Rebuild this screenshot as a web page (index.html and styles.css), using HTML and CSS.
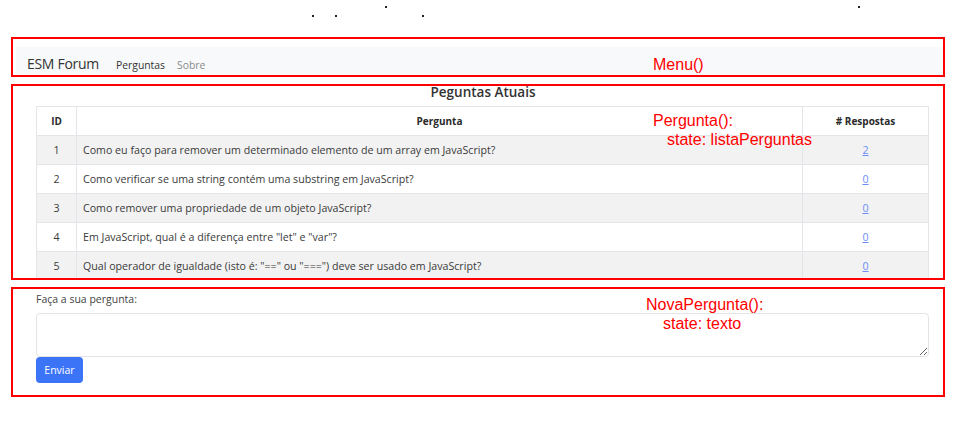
FILE: index.html
```html
<!DOCTYPE html>
<html lang="pt">
<head>
<meta charset="utf-8">
<title>ESM Forum</title>
<link rel="stylesheet" href="styles.css">
</head>
<body>
<div class="page">
  <div class="marks">
    <span class="dot d1"></span><span class="dot d2"></span><span class="dot d3"></span><span class="dot d4"></span><span class="dot d5"></span>
  </div>

  <section class="box box-menu">
    <nav class="navbar">
      <span class="brand">ESM Forum</span>
      <a class="nav-link active">Perguntas</a>
      <a class="nav-link muted">Sobre</a>
    </nav>
    <div class="note note-menu">Menu()</div>
  </section>

  <section class="box box-list">
    <h2 class="title">Peguntas Atuais</h2>
    <table class="qtable">
      <thead>
        <tr><th class="c-id">ID</th><th class="c-q">Pergunta</th><th class="c-r"># Respostas</th></tr>
      </thead>
      <tbody>
        <tr class="odd"><td class="c-id">1</td><td class="c-q">Como eu faço para remover um determinado elemento de um array em JavaScript?</td><td class="c-r"><a class="link">2</a></td></tr>
        <tr><td class="c-id">2</td><td class="c-q">Como verificar se uma string contém uma substring em JavaScript?</td><td class="c-r"><a class="link">0</a></td></tr>
        <tr class="odd"><td class="c-id">3</td><td class="c-q">Como remover uma propriedade de um objeto JavaScript?</td><td class="c-r"><a class="link">0</a></td></tr>
        <tr><td class="c-id">4</td><td class="c-q">Em JavaScript, qual é a diferença entre "let" e "var"?</td><td class="c-r"><a class="link">0</a></td></tr>
        <tr class="odd"><td class="c-id">5</td><td class="c-q">Qual operador de igualdade (isto é: "==" ou "===") deve ser usado em JavaScript?</td><td class="c-r"><a class="link">0</a></td></tr>
      </tbody>
    </table>
    <div class="note note-list"><span class="line">Pergunta():</span><span class="line indent-a">state: listaPerguntas</span></div>
  </section>

  <section class="box box-form">
    <label class="form-label" for="texto">Faça a sua pergunta:</label>
    <textarea id="texto" class="form-input"></textarea>
    <button class="btn">Enviar</button>
    <div class="note note-form"><span class="line">NovaPergunta():</span><span class="line indent-b">state: texto</span></div>
  </section>
</div>
</body>
</html>
```
FILE: styles.css
```css
* { box-sizing: border-box; }
html, body { margin: 0; padding: 0; background: #fff; }
body {
  font-family: "Open Sans", "Noto Sans", sans-serif;
  color: #333;
  width: 956px;
  height: 426px;
  overflow: hidden;
}
.page { display: flex; flex-direction: column; gap: 7px; }

.marks { position: relative; height: 30px; }
.dot { position: absolute; width: 2px; height: 2px; background: #222; }
.d1 { left: 312px; top: 15px; }
.d2 { left: 335px; top: 15px; }
.d3 { left: 385px; top: 6px; }
.d4 { left: 422px; top: 15px; }
.d5 { left: 858px; top: 6px; }

.box {
  position: relative;
  margin: 0 11px;
  border: 2px solid #f00;
}

/* menu */
.box-menu { height: 40px; }
.navbar {
  margin: 8px 0 0 3px;
  height: 28px;
  background: #f8f9fa;
  display: flex;
  align-items: baseline;
  padding: 8px 11px 0;
}
.brand { font-size: 14px; letter-spacing: -0.3px; line-height: 18px; color: #333; margin-right: 17px; }
.nav-link { font-size: 10.4px; line-height: 18px; color: #333; margin-right: 12px; }
.nav-link.muted { color: #8a8a8a; }

/* list */
.box-list { height: 196px; overflow: hidden; }
.title {
  margin: 0 0 7px;
  font-size: 13.5px;
  line-height: 13px;
  font-weight: 600;
  text-align: center;
  color: #333;
  padding-left: 10px;
}
.qtable {
  margin-left: 23px;
  width: 893px;
  border-collapse: collapse;
  font-size: 10.65px;
  table-layout: fixed;
}
.qtable th, .qtable td {
  border: 1px solid #e3e5e8;
  height: 29px;
  padding: 0 6px;
  vertical-align: middle;
  color: #3a3a3a;
}
.qtable th { font-weight: 700; font-size: 10px; text-align: center; color: #2a2a2a; }
.qtable .c-id { width: 40px; text-align: center; }
.qtable .c-r { width: 126px; text-align: center; }
.qtable td.c-q { text-align: left; }
.qtable tr.odd td { background: #f2f2f2; }
.link { color: #6c8ef6; text-decoration: underline; }

/* form */
.box-form { height: 110px; padding: 2px 14px 0 23px; display: flex; flex-direction: column; align-items: flex-start; }
.form-label { font-size: 10.5px; line-height: 16px; color: #444; margin-bottom: 6px; }
.form-input {
  width: 893px;
  height: 44px;
  border: 1px solid #e2e4e7;
  border-radius: 4px;
  margin: 0;
  padding: 4px 8px;
  font: inherit;
  display: block;
}
.btn {
  width: 47px;
  height: 26px;
  border: 0;
  border-radius: 4px;
  background: #3c74f8;
  color: #fff;
  font-family: inherit;
  font-size: 10.5px;
  padding: 0;
}

/* annotations */
.note {
  position: absolute;
  font-family: "Liberation Sans", Arial, sans-serif;
  font-size: 16px;
  line-height: 19px;
  color: #f00;
  white-space: nowrap;
}
.note .line { display: block; }
.note-menu { left: 640px; top: 16px; }
.note-list { left: 640px; top: 25px; }
.indent-a { padding-left: 14px; }
.note-form { left: 633px; top: 6px; }
.indent-b { padding-left: 17px; }
```
